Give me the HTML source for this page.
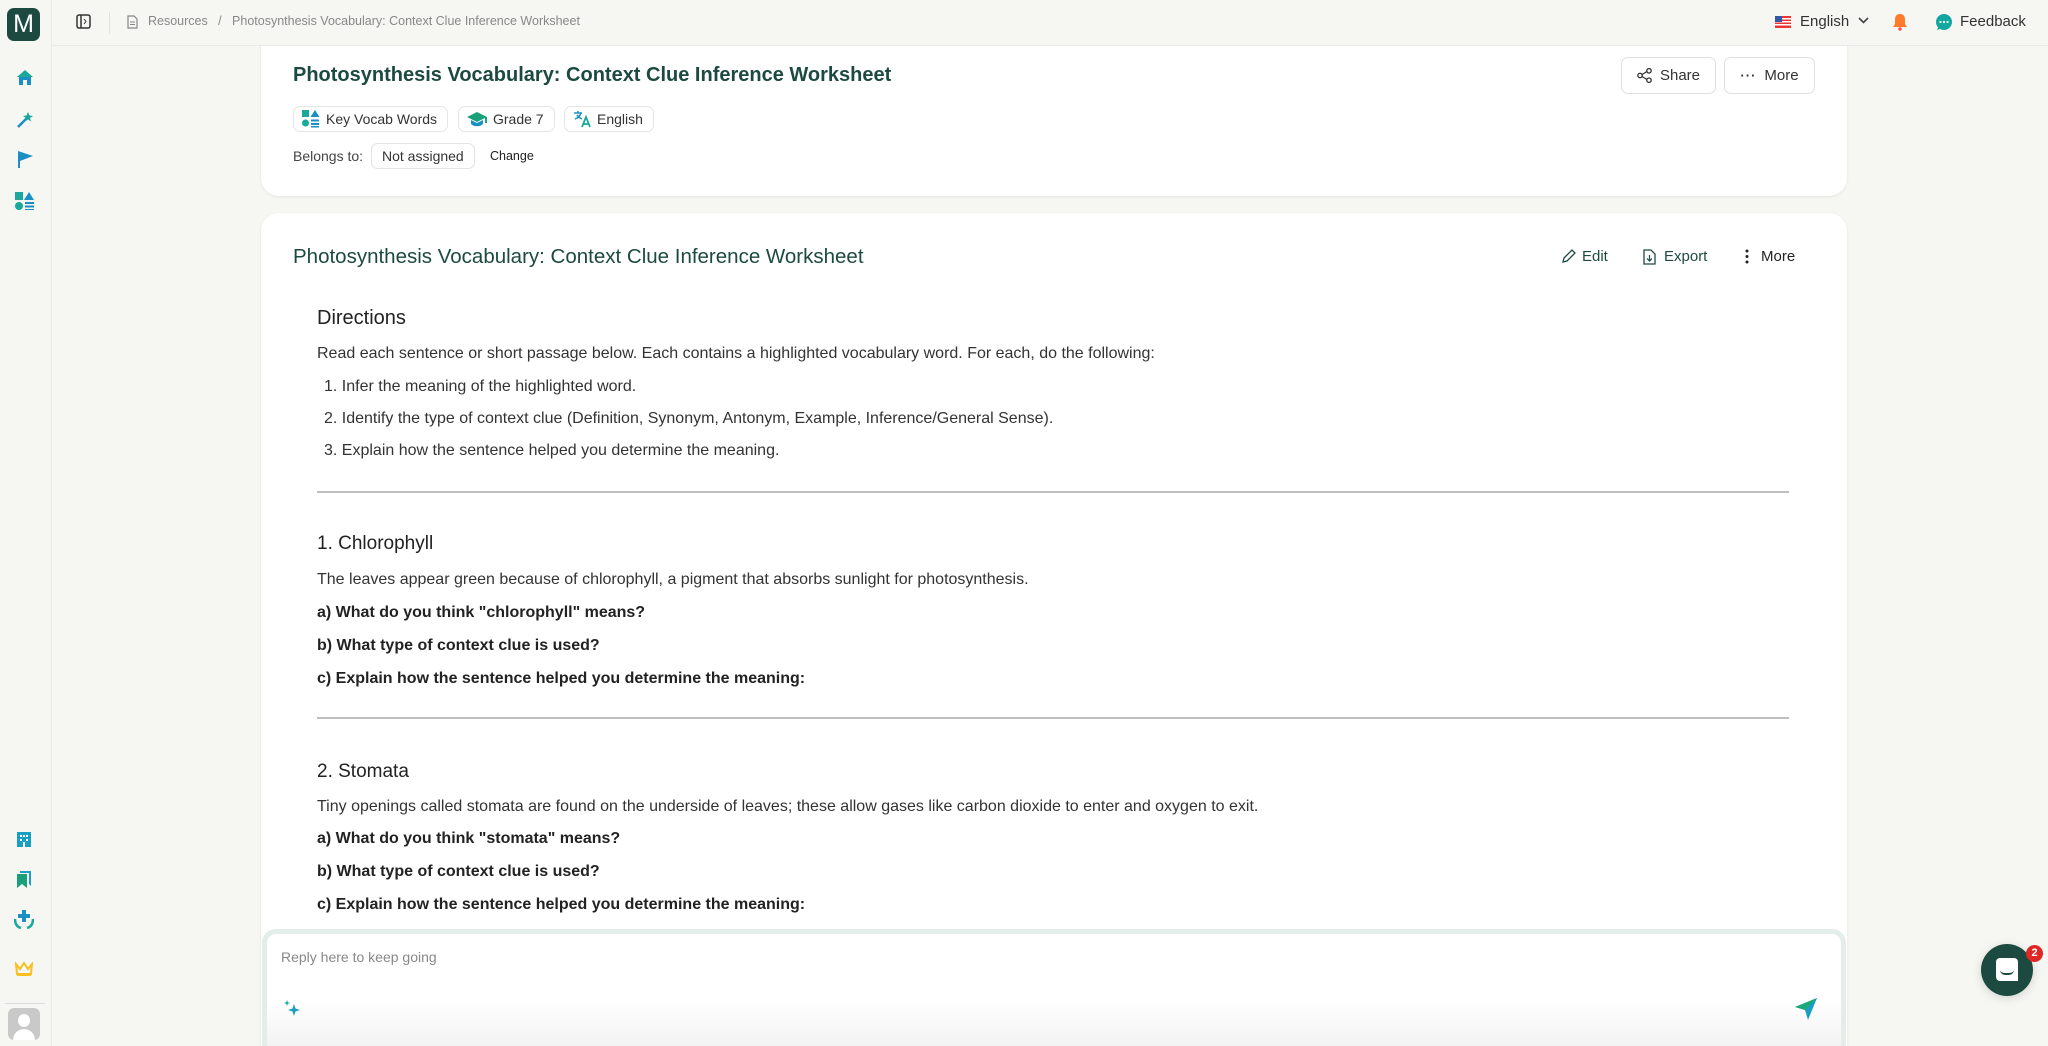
<!DOCTYPE html>
<html style="overflow:hidden;width:2048px;height:1046px"><head><meta charset="utf-8"><style>
*{box-sizing:border-box;margin:0;padding:0}
body{width:2048px;height:1046px;overflow:hidden;background:#f6f7f3;font-family:"Liberation Sans",sans-serif;color:#222;position:relative}
.side{position:absolute;left:0;top:0;width:52px;height:1046px;border-right:1px solid #e8eae5;background:#f6f7f3;z-index:5}
.hdr{position:absolute;left:52px;top:0;right:0;height:46px;border-bottom:1px solid #e8eae5;background:#f6f7f3;z-index:5}
.abs{position:absolute}
.card{position:absolute;left:261px;width:1586px;background:#fff;border-radius:18px;box-shadow:0 1px 3px rgba(0,0,0,.08)}
.tag{position:absolute;height:26px;border:1px solid #e4e6e2;border-radius:7px;font-size:14px;line-height:24px;padding:0 10px 0 8px;color:#333;display:flex;align-items:center;gap:6px}
.btn{position:absolute;height:37px;border:1px solid #dfe1dd;border-radius:7px;font-size:15px;color:#333;display:flex;align-items:center;justify-content:center;gap:8px}
.t{position:absolute;left:317px;font-size:16px;color:#333;white-space:nowrap}
.b{font-weight:bold;color:#222}
.hr{position:absolute;left:317px;width:1472px;height:2px;background:#bdbfbd}
</style></head><body>
<div class="side">
 <div class="abs" style="left:7px;top:8px;width:33px;height:33px;background:#1d4a40;border-radius:7px;color:#fff;font-size:25px;text-align:center;line-height:33px">M</div>
 <svg class="abs" style="left:16px;top:69px" width="18" height="17" viewBox="0 0 18 17"><path d="M9 1L1 8h2v8h4v-5h4v5h4V8h2z" fill="#1aa89a"/><path d="M3 8h12v8h-4v-5H7v5H3z" fill="#1a8fc4"/></svg>
 <svg class="abs" style="left:16px;top:111px" width="18" height="18" viewBox="0 0 18 18"><path d="M2 16L11 7" stroke="#1a8fc4" stroke-width="2.5"/><path d="M12 1l1.5 3.5L17 5l-3 2 1 3.5-3-2-3 2 1-3.5-3-2 3.5-.5z" fill="#1aa89a"/></svg>
 <svg class="abs" style="left:16px;top:151px" width="18" height="17" viewBox="0 0 18 17"><path d="M2 0v17h2v-7l13-5L2 0z" fill="#1a8fc4"/></svg>
 <svg class="abs" style="left:15px;top:192px" width="20" height="18"><rect x="0" y="0" width="8" height="8" fill="#1aa89a"/><path d="M14 0l5 8h-10z" fill="#1a8fc4"/><circle cx="4" cy="14" r="4" fill="#1aa89a"/><rect x="10" y="10" width="9" height="2" fill="#1a8fc4"/><rect x="10" y="13.5" width="9" height="2" fill="#1a8fc4"/><rect x="10" y="17" width="9" height="1.5" fill="#1a8fc4"/></svg>
 <svg class="abs" style="left:16px;top:830px" width="16" height="17"><rect x="1" y="2" width="14" height="15" fill="#1a9fc0"/><rect x="4" y="5" width="2" height="2" fill="#fff"/><rect x="7" y="5" width="2" height="2" fill="#fff"/><rect x="10" y="5" width="2" height="2" fill="#fff"/><rect x="4" y="9" width="2" height="2" fill="#fff"/><rect x="10" y="9" width="2" height="2" fill="#fff"/><rect x="7" y="12" width="2" height="5" fill="#fff"/></svg>
 <svg class="abs" style="left:16px;top:871px" width="16" height="17"><path d="M4 0h11v15l-2-2V2H4z" fill="#1a9fc0"/><path d="M1 3h10v14l-5-4-5 4z" fill="#1aa07a"/></svg>
 <svg class="abs" style="left:14px;top:910px" width="20" height="19"><path d="M8 0h4v4h4v4h-4v4H8V8H4V4h4z" fill="#1a8fc4"/><path d="M1 9c0 5 2 8 6 9M19 9c0 5-2 8-6 9" stroke="#1aa89a" stroke-width="2.5" fill="none"/></svg>
 <svg class="abs" style="left:15px;top:962px" width="18" height="15"><path d="M1 2l4 5 4-6 4 6 4-5-1 10H2z" fill="none" stroke="#f5c020" stroke-width="2"/><rect x="2" y="12" width="14" height="2" fill="#f5c020"/></svg>
 <div class="abs" style="left:5px;top:1003px;width:40px;height:1px;background:#ddd"></div>
 <div class="abs" style="left:8px;top:1008px;width:32px;height:32px;background:#c9c9c9;border-radius:6px;overflow:hidden"><div class="abs" style="left:10px;top:6px;width:12px;height:13px;border-radius:50%;background:#fff"></div><div class="abs" style="left:5px;top:21px;width:22px;height:14px;border-radius:11px 11px 0 0;background:#fff"></div></div>
</div>
<div class="hdr">
 <svg class="abs" style="left:24px;top:14px" width="15" height="15"><rect x="1" y="1" width="13" height="13" rx="2" fill="none" stroke="#333" stroke-width="1.5"/><line x1="5" y1="1" x2="5" y2="14" stroke="#333" stroke-width="1.5"/><path d="M8 5l2 2.5-2 2.5" stroke="#333" fill="none"/></svg>
 <div class="abs" style="left:57px;top:12px;width:1px;height:22px;background:#e2e2e2"></div>
 <svg class="abs" style="left:75px;top:15px" width="11" height="14"><path d="M1 1h6l3 3v9H1z" fill="none" stroke="#888" stroke-width="1.2"/><path d="M3 7h5M3 9.5h5" stroke="#888"/></svg>
 <div class="abs" style="left:96px;top:14px;font-size:12.5px;color:#888">Resources&nbsp;&nbsp;&nbsp;/&nbsp;&nbsp;&nbsp;Photosynthesis Vocabulary: Context Clue Inference Worksheet</div>
 <svg class="abs" style="left:1723px;top:16px" width="16" height="12"><rect width="16" height="12" fill="#e33"/><rect y="2" width="16" height="1.5" fill="#fff"/><rect y="5" width="16" height="1.5" fill="#fff"/><rect y="8" width="16" height="1.5" fill="#fff"/><rect width="7" height="6" fill="#3457a8"/></svg>
 <div class="abs" style="left:1748px;top:13px;font-size:15px;color:#333">English</div>
 <svg class="abs" style="left:1806px;top:17px" width="11" height="8"><path d="M1 1l4.5 4.5L10 1" stroke="#444" stroke-width="1.6" fill="none"/></svg>
 <svg class="abs" style="left:1840px;top:13px" width="16" height="18"><path d="M8 1c4 0 5 3 5 6v4l2 3H1l2-3V7c0-3 1-6 5-6z" fill="#ff7a2a"/><circle cx="8" cy="16" r="1.7" fill="#ff4d4d"/></svg>
 <svg class="abs" style="left:1883px;top:13px" width="18" height="18"><circle cx="9" cy="9" r="8" fill="#14a6a0"/><path d="M2 17l2-5 4 3z" fill="#14a6a0"/><circle cx="5.5" cy="9" r="1.1" fill="#fff"/><circle cx="9" cy="9" r="1.1" fill="#fff"/><circle cx="12.5" cy="9" r="1.1" fill="#fff"/></svg>
 <div class="abs" style="left:1908px;top:13px;font-size:15px;color:#333">Feedback</div>
</div>

<div class="card" style="top:10px;height:186px">
 <div class="abs" style="left:32px;top:54px;font-size:20px;font-weight:bold;color:#1d4a40">Photosynthesis Vocabulary: Context Clue Inference Worksheet</div>
 <div class="tag" style="left:32px;top:96px"><svg width="18" height="18"><rect x="0" y="0" width="7" height="7" fill="#1aa89a"/><path d="M13 0l4.5 7h-9z" fill="#1a8fc4"/><circle cx="3.5" cy="13" r="3.5" fill="#1aa89a"/><rect x="9" y="9.5" width="8" height="2" fill="#1a8fc4"/><rect x="9" y="13" width="8" height="2" fill="#1a8fc4"/><rect x="9" y="16" width="8" height="1.5" fill="#1a8fc4"/></svg>Key Vocab Words</div>
 <div class="tag" style="left:197px;top:96px"><svg width="20" height="16"><path d="M10 1L0 6l10 5 8-4v5h2V6z" fill="#1aa07a"/><path d="M4 9v4c3 3 9 3 12 0V9l-6 3z" fill="#1a8fc4"/></svg>Grade 7</div>
 <div class="tag" style="left:303px;top:96px"><svg width="18" height="18"><path d="M1 3h8M5 1v2M2 9c3-1 5-3 6-6M4 5c1 2 3 3 5 4" stroke="#1a8fc4" stroke-width="1.5" fill="none"/><path d="M9 17l4-10 4 10M10.5 14h5" stroke="#1aa89a" stroke-width="1.8" fill="none"/></svg>English</div>
 <div class="abs" style="left:32px;top:138px;font-size:14px;color:#444">Belongs to:</div>
 <div class="tag" style="left:110px;top:133px;padding:0 10px">Not assigned</div>
 <div class="abs" style="left:229px;top:139px;font-size:12.5px;color:#222">Change</div>
 <div class="btn" style="left:1360px;top:47px;width:95px"><svg width="15" height="15"><circle cx="3" cy="7.5" r="2.2" fill="none" stroke="#333" stroke-width="1.3"/><circle cx="12" cy="2.8" r="2.2" fill="none" stroke="#333" stroke-width="1.3"/><circle cx="12" cy="12.2" r="2.2" fill="none" stroke="#333" stroke-width="1.3"/><path d="M5 6.5l5-3M5 8.5l5 3" stroke="#333" stroke-width="1.3"/></svg>Share</div>
 <div class="btn" style="left:1463px;top:47px;width:91px"><span style="font-size:13px;letter-spacing:1px;font-weight:bold">···</span> More</div>
</div>

<div class="card" style="top:213px;height:833px;border-radius:18px 18px 0 0">
 <div class="abs" style="left:32px;top:32px;font-size:20.5px;color:#1d4a40">Photosynthesis Vocabulary: Context Clue Inference Worksheet</div>
 <div class="abs" style="left:1300px;top:35px;font-size:15px;color:#1d4a40;display:flex;align-items:center;gap:6px"><svg width="15" height="15"><path d="M2 13l1-4 8-8 3 3-8 8z" fill="none" stroke="#1d4a40" stroke-width="1.3"/></svg>Edit</div>
 <div class="abs" style="left:1382px;top:35px;font-size:15px;color:#1d4a40;display:flex;align-items:center;gap:8px"><svg width="13" height="16"><path d="M1 1h7l4 4v10H1z" fill="none" stroke="#1d4a40" stroke-width="1.3"/><path d="M6.5 6v6M4 9.5l2.5 2.5 2.5-2.5" stroke="#1d4a40" stroke-width="1.2" fill="none"/></svg>Export</div>
 <div class="abs" style="left:1484px;top:35px;font-size:15px;color:#222;display:flex;align-items:center;gap:12px"><svg width="4" height="15"><circle cx="2" cy="2" r="1.5" fill="#222"/><circle cx="2" cy="7.5" r="1.5" fill="#222"/><circle cx="2" cy="13" r="1.5" fill="#222"/></svg>More</div>
</div>
<div class="t" style="top:307px;font-size:20px;color:#222">Directions</div>
<div class="t" style="top:345px">Read each sentence or short passage below. Each contains a highlighted vocabulary word. For each, do the following:</div>
<div class="t" style="top:378px;left:324px">1. Infer the meaning of the highlighted word.</div>
<div class="t" style="top:410px;left:324px">2. Identify the type of context clue (Definition, Synonym, Antonym, Example, Inference/General Sense).</div>
<div class="t" style="top:442px;left:324px">3. Explain how the sentence helped you determine the meaning.</div>
<div class="hr" style="top:491px"></div>
<div class="t" style="top:533px;font-size:19px;color:#222">1. Chlorophyll</div>
<div class="t" style="top:571px">The leaves appear green because of chlorophyll, a pigment that absorbs sunlight for photosynthesis.</div>
<div class="t b" style="top:604px">a) What do you think "chlorophyll" means?</div>
<div class="t b" style="top:637px">b) What type of context clue is used?</div>
<div class="t b" style="top:670px">c) Explain how the sentence helped you determine the meaning:</div>
<div class="hr" style="top:717px"></div>
<div class="t" style="top:761px;font-size:19px;color:#222">2. Stomata</div>
<div class="t" style="top:798px">Tiny openings called stomata are found on the underside of leaves; these allow gases like carbon dioxide to enter and oxygen to exit.</div>
<div class="t b" style="top:830px">a) What do you think "stomata" means?</div>
<div class="t b" style="top:863px">b) What type of context clue is used?</div>
<div class="t b" style="top:896px">c) Explain how the sentence helped you determine the meaning:</div>

<div class="abs" style="left:262px;top:929px;width:1584px;height:130px;border:5px solid #e3eeeb;border-radius:14px;background:linear-gradient(#fff 55%,#f0f1f0);"></div>
<div class="abs" style="left:281px;top:949px;font-size:14px;color:#888">Reply here to keep going</div>
<svg class="abs" style="left:283px;top:999px" width="20" height="20"><path d="M11 5l1.5 4.5L17 11l-4.5 1.5L11 17l-1.5-4.5L5 11l4.5-1.5z" fill="#1a9fc0"/><path d="M4 1l.8 2.2L7 4l-2.2.8L4 7l-.8-2.2L1 4l2.2-.8z" fill="#1aa89a"/></svg>
<svg class="abs" style="left:1794px;top:997px" width="24" height="24"><path d="M1 10L23 1 14 23 11 13z" fill="#1a9fc0"/><path d="M1 10L23 1 11 13z" fill="#1aa87a"/></svg>
<div class="abs" style="left:1981px;top:944px;width:52px;height:52px;border-radius:50%;background:#1d4a40;box-shadow:0 2px 10px rgba(0,0,0,.15)"><div class="abs" style="left:15px;top:14px;width:22px;height:23px;background:#fff;border-radius:4px 4px 0 4px"></div><div class="abs" style="left:19px;top:26px;width:14px;height:5px;border-bottom:2px solid #1d4a40;border-radius:0 0 8px 8px"></div></div>
<div class="abs" style="left:2026px;top:945px;width:17px;height:17px;border-radius:50%;background:#e02727;color:#fff;font-size:11px;font-weight:bold;text-align:center;line-height:17px">2</div>
</body></html>
